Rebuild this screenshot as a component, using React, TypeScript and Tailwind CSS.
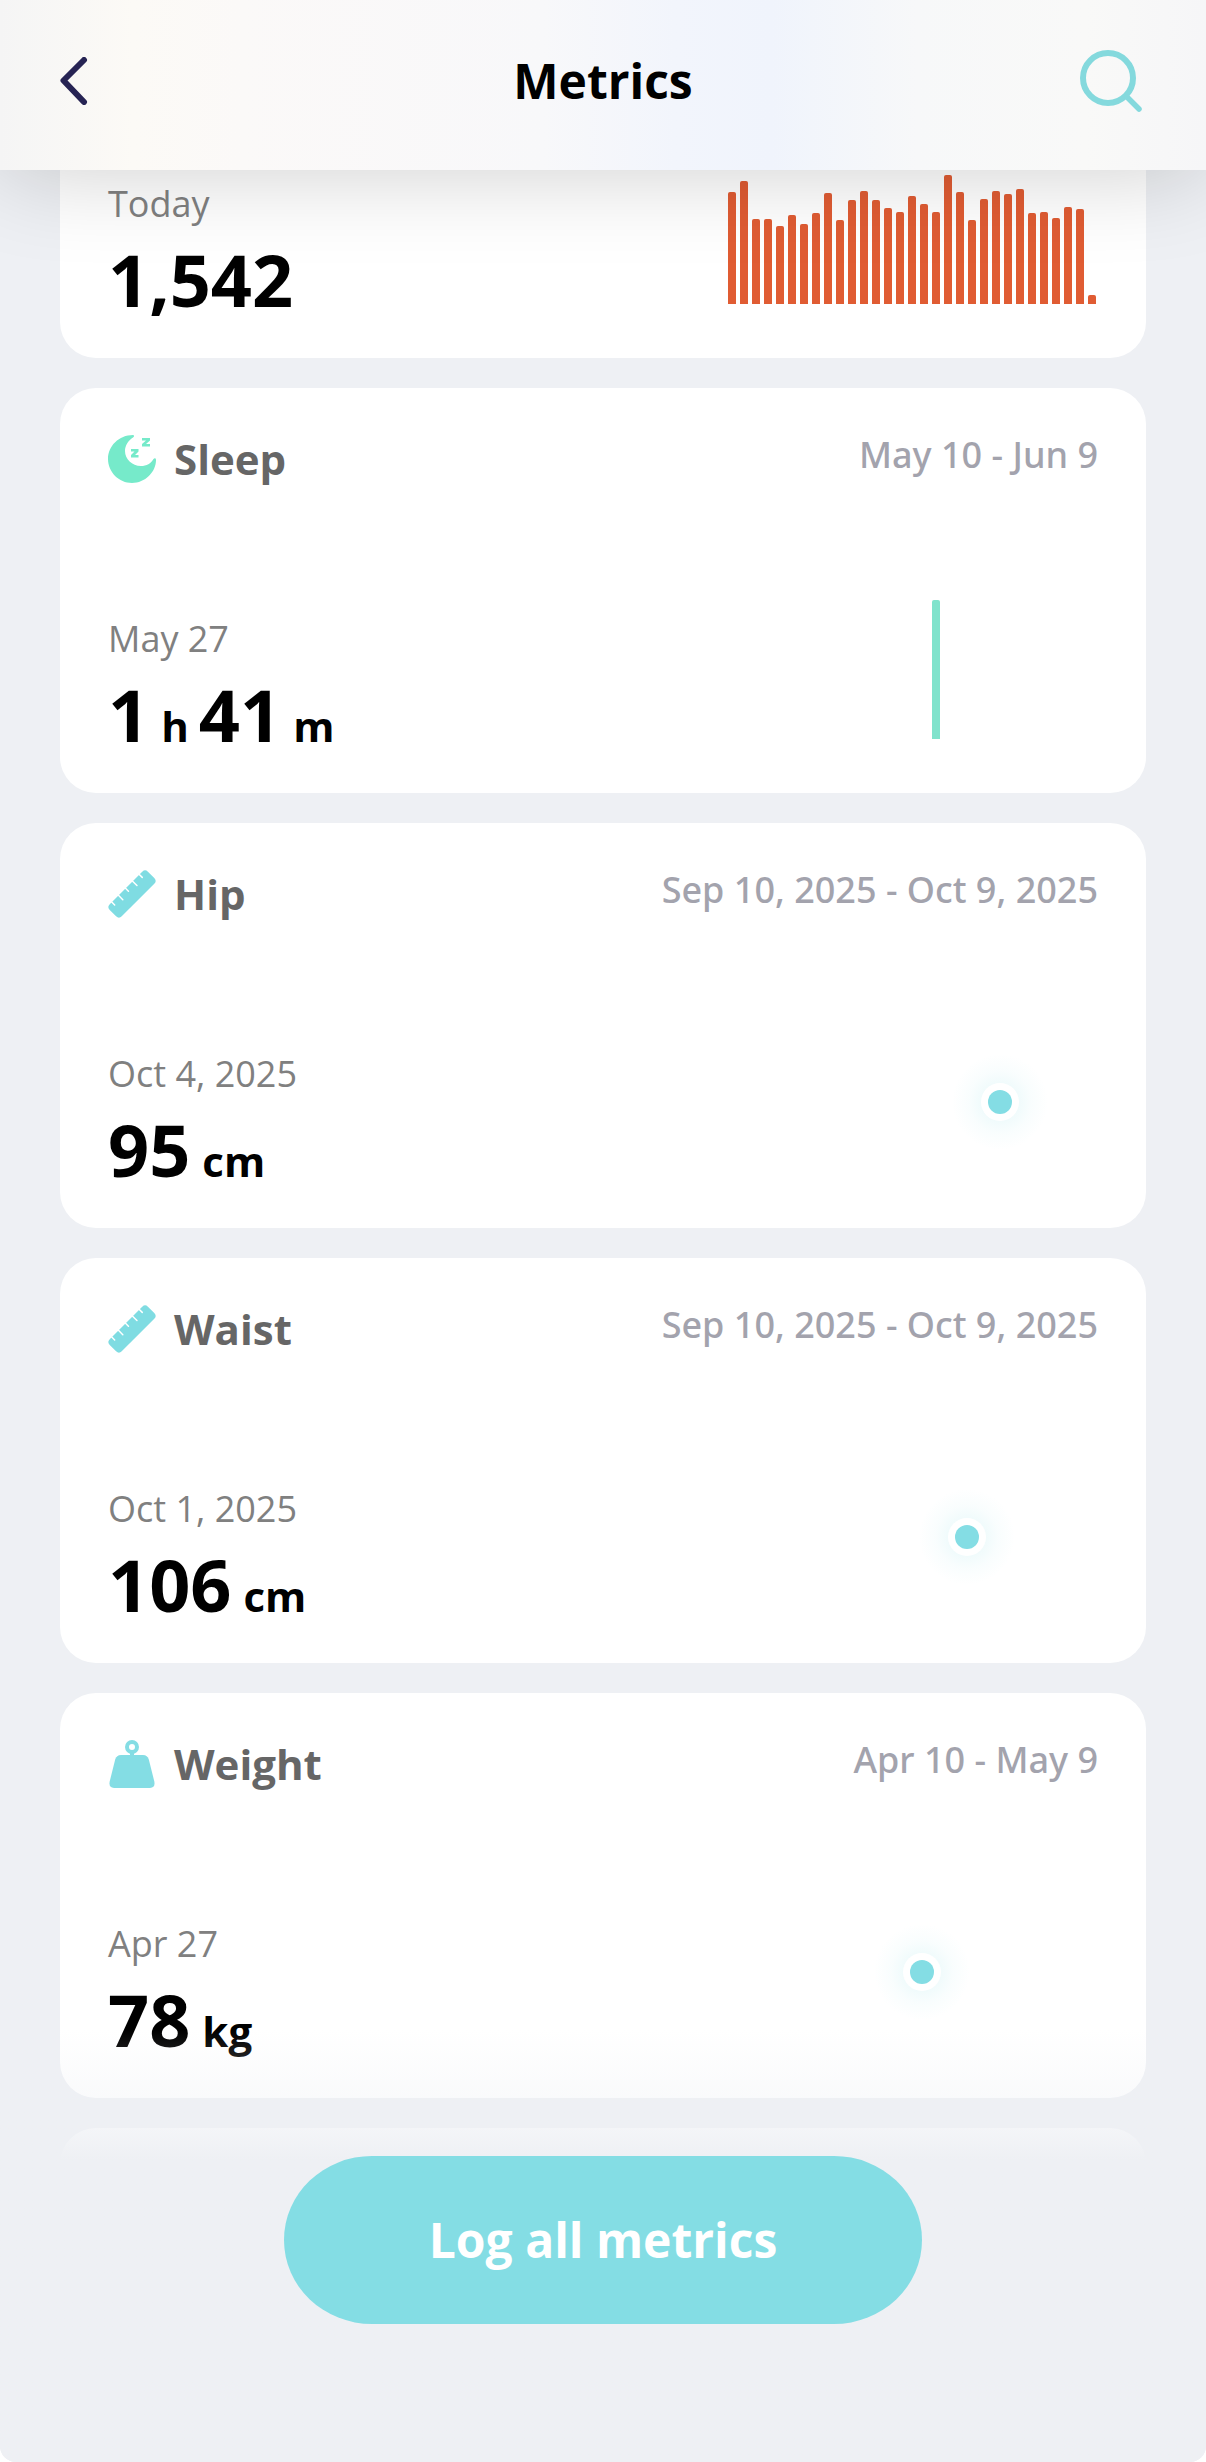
import type { ReactNode } from "react";

type Metric = {
  name: string;
  icon: ReactNode;
  range: string;
  date: string;
  value: [string, string][];
  chart: ReactNode;
};

const steps = [
  112, 123, 85, 85, 78, 89, 80, 91, 111, 84, 104, 113, 104, 96, 92, 108, 100,
  92, 129, 112, 84, 105, 113, 110, 115, 91, 92, 86, 97, 95, 9,
];

const sleep = steps.map((_, day) => (day === 17 ? 139 : 0));

const metrics: Metric[] = [
  {
    name: "Sleep",
    icon: <MoonIcon />,
    range: "May 10 - Jun 9",
    date: "May 27",
    value: [
      ["1", "h"],
      ["41", "m"],
    ],
    chart: <BarChart values={sleep} color="#80e3cc" />,
  },
  {
    name: "Hip",
    icon: <RulerIcon />,
    range: "Sep 10, 2025 - Oct 9, 2025",
    date: "Oct 4, 2025",
    value: [["95", "cm"]],
    chart: <DotChart x={274} />,
  },
  {
    name: "Waist",
    icon: <RulerIcon />,
    range: "Sep 10, 2025 - Oct 9, 2025",
    date: "Oct 1, 2025",
    value: [["106", "cm"]],
    chart: <DotChart x={241} />,
  },
  {
    name: "Weight",
    icon: <WeightIcon />,
    range: "Apr 10 - May 9",
    date: "Apr 27",
    value: [["78", "kg"]],
    chart: <DotChart x={196} />,
  },
];

export default function App() {
  return (
    <div className="bg-white">
      <div className="flex min-h-screen flex-col rounded-b-2xl bg-[#eef0f4] font-['Open_Sans',sans-serif] text-black">
        <Header />
        <main className="flex flex-col gap-[30px] px-[60px]">
          <section className="rounded-b-[36px] bg-white px-12 pb-[34px]">
            <Reading
              date="Today"
              value={[["1,542", ""]]}
              chart={<BarChart values={steps} color="#e05c33" />}
            />
          </section>
          {metrics.map((metric) => (
            <MetricCard key={metric.name} metric={metric} />
          ))}
          <div className="h-9 rounded-t-[36px] bg-white" />
        </main>
        <footer className="sticky bottom-0 z-10 -mt-[134px] flex grow flex-col items-center rounded-b-2xl bg-linear-to-b from-[#eef0f4]/0 via-[#eef0f4]/35 via-[70px] to-[#eef0f4] to-[130px] pt-[126px] pb-[138px]">
          <button
            type="button"
            className="h-[168px] w-[638px] max-w-[90%] rounded-[88px/84px] bg-[#84dde4] text-[48px] font-bold text-white"
          >
            Log all metrics
          </button>
        </footer>
      </div>
    </div>
  );
}

function Header() {
  return (
    <header className="sticky top-0 z-10 grid h-[170px] grid-cols-[1fr_auto_1fr] items-center bg-[linear-gradient(90deg,#f5f5f5_0%,#fcfaf6_11%,#fbf9f8_20%,#f8f8fa_45%,#f2f5fc_56%,#f0f4fc_64%,#f7f8f9_76%,#f9f9f8_90%,#f6f6f8_100%)] px-[60px] pb-2 shadow-[0_0_96px_rgba(0,0,0,0.2)]">
      <button type="button" aria-label="Back" className="justify-self-start">
        <svg
          className="h-[48px] w-[28px]"
          viewBox="0 0 28 48"
          fill="none"
          stroke="#262353"
          strokeWidth="6"
          strokeLinecap="round"
          strokeLinejoin="round"
        >
          <path d="M24 3 3.500 23.500 24 45" />
        </svg>
      </button>
      <h1 className="text-[48px] font-bold">Metrics</h1>
      <button type="button" aria-label="Search" className="justify-self-end">
        <svg
          className="h-[62px] w-[66px]"
          viewBox="0 0 66 62"
          fill="none"
          stroke="#84d9dd"
          strokeLinecap="round"
        >
          <circle cx="28" cy="28" r="25" strokeWidth="6" />
          <path d="m47 47 12 12" strokeWidth="5.500" />
        </svg>
      </button>
    </header>
  );
}

function MetricCard({ metric }: { metric: Metric }) {
  return (
    <article className="rounded-[36px] bg-white px-12 pt-[41px] pb-[34px]">
      <div className="flex items-start justify-between pb-[116px]">
        <h2 className="flex items-center gap-[18px] text-[42px] leading-[60px] font-bold text-[#666]">
          {metric.icon}
          {metric.name}
        </h2>
        <p className="font-['Noto_Sans',sans-serif] text-[36px] leading-[52px] font-medium text-[#a3a3ad]">
          {metric.range}
        </p>
      </div>
      <Reading date={metric.date} value={metric.value} chart={metric.chart} />
    </article>
  );
}

function Reading(props: {
  date: string;
  value: [string, string][];
  chart: ReactNode;
}) {
  return (
    <div className="flex h-[154px] items-end justify-between">
      <div>
        <p className="mb-[6px] text-[36px] leading-[48px] text-[#808080]">
          {props.date}
        </p>
        <p className="flex items-baseline gap-[10px] text-[72px] leading-[90px] font-bold">
          {props.value.map(([amount, unit]) => (
            <span key={amount}>
              {amount}
              {unit && (
                <span className="ml-3 text-[42px] leading-none">{unit}</span>
              )}
            </span>
          ))}
        </p>
      </div>
      <div className="pb-5">{props.chart}</div>
    </div>
  );
}

function BarChart({ values, color }: { values: number[]; color: string }) {
  return (
    <svg
      className="h-[139px] w-[372px]"
      viewBox="0 0 372 139"
      fill={color}
      aria-hidden="true"
    >
      {values.map((v, i) =>
        v ? (
          <path
            key={i}
            d={`M${i * 12 + 2} 139v${2 - v}q0-2 2-2h4q2 0 2 2v${v - 2}z`}
          />
        ) : null
      )}
    </svg>
  );
}

function DotChart({ x }: { x: number }) {
  return (
    <svg
      className="h-[139px] w-[372px]"
      viewBox="0 0 372 139"
      aria-hidden="true"
    >
      <defs>
        <radialGradient id="glow">
          <stop offset="0.350" stopColor="#84dde4" stopOpacity="0.130" />
          <stop offset="0.650" stopColor="#84dde4" stopOpacity="0.050" />
          <stop offset="1" stopColor="#84dde4" stopOpacity="0" />
        </radialGradient>
      </defs>
      <circle cx={x} cy="67" r="48" fill="url(#glow)" />
      <circle cx={x} cy="67" r="19" fill="#fff" />
      <circle cx={x} cy="67" r="12" fill="#84dde4" />
    </svg>
  );
}

function MoonIcon() {
  return (
    <svg className="size-12" viewBox="0 0 48 48" fill="#76eaca">
      <path d="M25 0C11 0 0 11 0 24s11 24 24 24 24-11 24-23c0-2-1.500-2-2.500-1C43 28.500 38.500 31 33 31c-9 0-16-7-16-15 0-5 3-10.500 8-13.500 1.500-1 1.300-2.500 0-2.500z" />
      <path d="M34 3h8v2.500L38 9h4v2.500h-8V9l4-3.500h-4zM23 14h7.500v2.500L27 20h3.500v2.500H23V20l3.500-3.500H23z" />
    </svg>
  );
}

function RulerIcon() {
  return (
    <svg className="size-12" viewBox="0 0 48 48">
      <g transform="rotate(-45 24 24)">
        <rect x="-3" y="15.500" width="54" height="17" rx="4" fill="#7fdce2" />
        <path
          d="M4 15v4.500M13.500 15v6.500M23.500 15v4.500M33.500 15v6.500M43 15v4.500"
          stroke="#fff"
          strokeWidth="1.500"
          strokeLinecap="round"
        />
      </g>
    </svg>
  );
}

function WeightIcon() {
  return (
    <svg className="size-12" viewBox="0 0 48 48" fill="#84dde4">
      <circle
        cx="24"
        cy="7"
        r="5"
        fill="none"
        stroke="#84dde4"
        strokeWidth="4"
      />
      <path d="M22 11h4v5h-4z" />
      <path d="M13 15h22q4.500 0 5.800 4.500l5.500 22Q47.500 48 42 48H6q-5.500 0-4.300-6.500l5.500-22Q8.500 15 13 15z" />
    </svg>
  );
}
